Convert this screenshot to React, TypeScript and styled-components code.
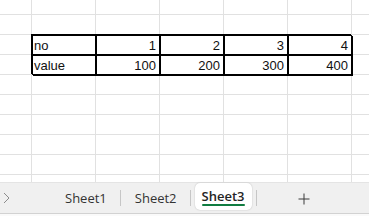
import React from "react";
import styled, { createGlobalStyle } from "styled-components";

const GlobalStyle = createGlobalStyle`
  html, body {
    margin: 0;
    padding: 0;
    background: #ffffff;
    overflow: hidden;
  }
`;

const Window = styled.div`
  width: 369px;
  height: 216px;
  display: flex;
  flex-direction: column;
  overflow: hidden;
`;

const Sheet = styled.div`
  height: 182px;
  flex: none;
  overflow: hidden;
  display: grid;
  grid-template-columns: 32px repeat(6, 64px);
  grid-template-rows: 15px repeat(9, 20px);
`;

const Cell = styled.div<{ $boxed?: boolean; $numeric?: boolean }>`
  position: relative;
  box-sizing: border-box;
  border-right: 1px solid ${(p) => (p.$boxed ? "#000" : "#e1e1e1")};
  border-bottom: 1px solid ${(p) => (p.$boxed ? "#000" : "#e1e1e1")};
  padding: 1px ${(p) => (p.$numeric ? "3px" : "0")} 0 2px;
  font-family: "Liberation Sans", Arial, sans-serif;
  font-size: 13px;
  line-height: 19px;
  color: #111;
  text-align: ${(p) => (p.$numeric ? "right" : "left")};
  white-space: nowrap;
  ${(p) =>
    p.$boxed &&
    `
    z-index: 1;
    box-shadow: -1px -1px 0 #000, 1px 1px 0 #000, inset 1px 1px 0 #000;
  `}
`;

const TabBar = styled.div`
  box-sizing: border-box;
  height: 32px;
  flex: none;
  display: flex;
  align-items: center;
  background: #f0f0f0;
  border-top: 1px solid #e4e4e4;
  border-bottom: 1px solid #d2d2d2;
`;

const BottomStrip = styled.div`
  flex: 1;
  background: #fafafa;
`;

const Nav = styled.div`
  width: 51px;
  flex: none;
  display: flex;
  align-items: center;
  padding-left: 3px;
  box-sizing: border-box;
`;

const Tab = styled.div`
  align-self: stretch;
  display: flex;
  align-items: flex-start;
  padding: 0 4px;
`;

const TabLabel = styled.div<{ $active?: boolean }>`
  position: relative;
  box-sizing: border-box;
  height: 27px;
  display: flex;
  align-items: center;
  padding: ${(p) => (p.$active ? "0 7px 2px" : "3px 9px 0 10px")};
  font-family: "Open Sans", "Noto Sans", sans-serif;
  font-size: 13px;
  font-weight: ${(p) => (p.$active ? 600 : 400)};
  color: ${(p) => (p.$active ? "#242424" : "#333333")};
  background: ${(p) => (p.$active ? "#ffffff" : "transparent")};
  border-radius: 5px;
  box-shadow: ${(p) => (p.$active ? "0 0 1.5px rgba(0,0,0,0.25)" : "none")};
  ${(p) =>
    p.$active &&
    `
    &::after {
      content: "";
      position: absolute;
      left: 7px;
      right: 7px;
      bottom: 4px;
      height: 2px;
      border-radius: 1px;
      background: #107c41;
    }
  `}
`;

const Divider = styled.span`
  width: 1px;
  height: 16px;
  background: #c6c6c6;
  flex: none;
`;

const AddButton = styled.div`
  margin-left: 41px;
  display: flex;
  align-items: center;
  margin-top: 1px;
`;

const rows: (string | number)[][] = [
  [],
  [],
  ["", "no", 1, 2, 3, 4],
  ["", "value", 100, 200, 300, 400],
];

function Grid(): React.JSX.Element {
  const cells: React.JSX.Element[] = [];
  for (let r = 0; r < 10; r++) {
    for (let c = 0; c < 7; c++) {
      const v = rows[r]?.[c] ?? "";
      const boxed = (r === 2 || r === 3) && c >= 1 && c <= 5;
      cells.push(
        <Cell key={`${r}-${c}`} $boxed={boxed} $numeric={typeof v === "number"}>
          {v}
        </Cell>
      );
    }
  }
  return <Sheet>{cells}</Sheet>;
}

function Tabs(): React.JSX.Element {
  const sheets = ["Sheet1", "Sheet2", "Sheet3"];
  const active = "Sheet3";
  return (
    <TabBar>
      <Nav>
        <svg width="7" height="12" viewBox="0 0 7 12">
          <polyline points="1,1 6,6 1,11" fill="none" stroke="#8c8c8c" strokeWidth="1" />
        </svg>
      </Nav>
      {sheets.map((s, i) => (
        <React.Fragment key={s}>
          {i > 0 && <Divider />}
          <Tab>
            <TabLabel $active={s === active}>{s}</TabLabel>
          </Tab>
        </React.Fragment>
      ))}
      <Divider />
      <AddButton>
        <svg width="12" height="12" viewBox="0 0 12 12">
          <path d="M6 0.5V11.5M0.5 6H11.5" stroke="#3a3a3a" strokeWidth="1" />
        </svg>
      </AddButton>
    </TabBar>
  );
}

export default function App(): React.JSX.Element {
  return (
    <Window>
      <GlobalStyle />
      <Grid />
      <Tabs />
      <BottomStrip />
    </Window>
  );
}
